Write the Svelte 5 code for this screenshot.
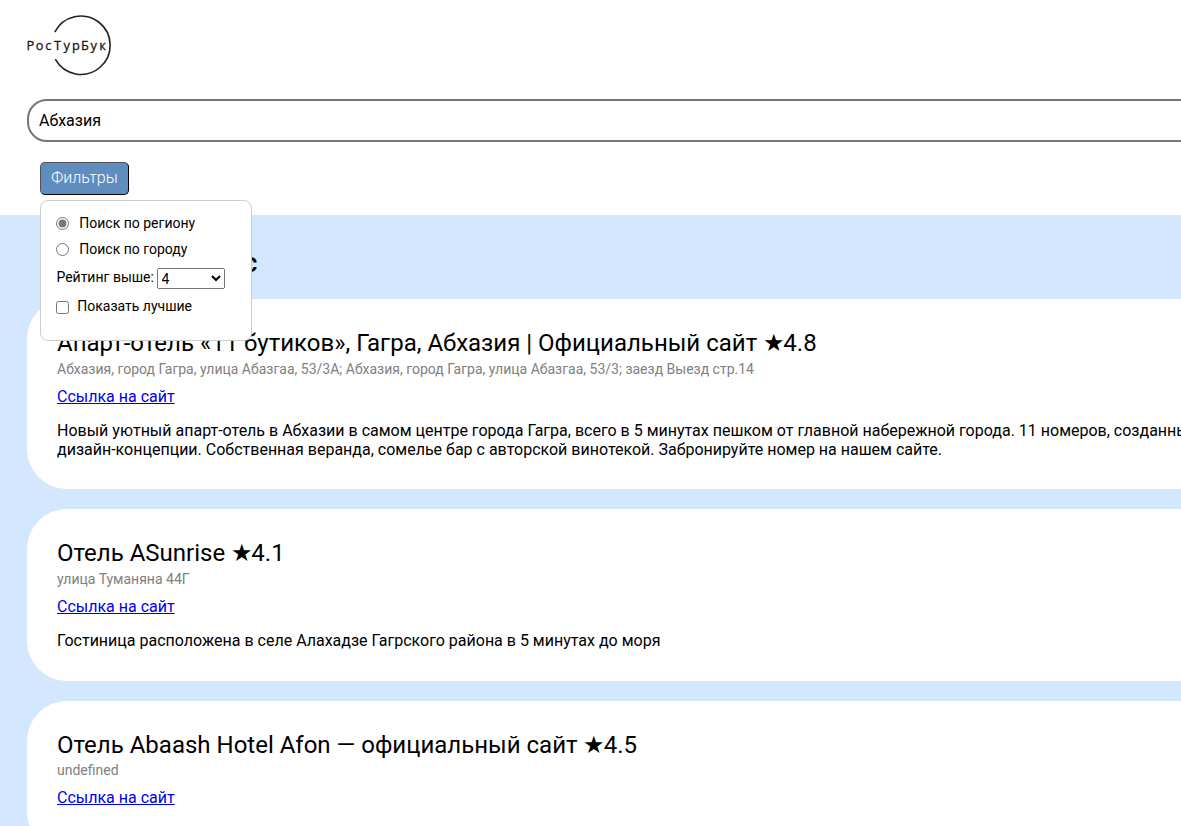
<script>
  let query = $state('Абхазия');
  let mode = $state('region');
  let rating = $state('4');
  let best = $state(false);

  const hotels = [
    {
      title: 'Апарт-отель «11 бутиков», Гагра, Абхазия | Официальный сайт',
      rating: '4.8',
      address: 'Абхазия, город Гагра, улица Абазгаа, 53/3А; Абхазия, город Гагра, улица Абазгаа, 53/3; заезд Выезд стр.14',
      text: [
        'Новый уютный апарт-отель в Абхазии в самом центре города Гагра, всего в 5 минутах пешком от главной набережной города. 11 номеров, созданных по',
        'дизайн-концепции. Собственная веранда, сомелье бар с авторской винотекой. Забронируйте номер на нашем сайте.'
      ]
    },
    {
      title: 'Отель ASunrise',
      rating: '4.1',
      address: 'улица Туманяна 44Г',
      text: ['Гостиница расположена в селе Алахадзе Гагрского района в 5 минутах до моря']
    },
    {
      title: 'Отель Abaash Hotel Afon — официальный сайт',
      rating: '4.5',
      address: 'undefined',
      text: ['']
    }
  ];
</script>

<div class="page">
  <header>
    <svg class="logo" width="86" height="62" viewBox="0 0 86 62" role="img" aria-label="РосТурБук">
      <path d="M27.8 18.2A29.2 29.2 0 1 1 28.3 45.2" fill="none" stroke="#222" stroke-width="1.6" />
      <text x="-0.6 8.8 18.2 27 36.6 45 54 63.6 72.2" y="36.4">РосТурБук</text>
    </svg>
    <input class="search" type="text" bind:value={query} />
    <div class="filters">
      <button type="button">Фильтры</button>
      <div class="menu">
        <label class="row"><input type="radio" value="region" bind:group={mode} /><span>Поиск по региону</span></label>
        <label class="row second"><input type="radio" value="city" bind:group={mode} /><span>Поиск по городу</span></label>
        <label class="row rate">
          <span>Рейтинг выше:</span>
          <select bind:value={rating}>
            <option>1</option><option>2</option><option>3</option><option>4</option>
          </select>
        </label>
        <label class="row best"><input type="checkbox" bind:checked={best} /><span>Показать лучшие</span></label>
      </div>
    </div>
  </header>

  <main>
    <h1>Ваш запрос</h1>
    {#each hotels as hotel}
      <article>
        <h2>{hotel.title} <span class="star">★</span>{hotel.rating}</h2>
        <p class="address">{hotel.address}</p>
        <a href="#site">Ссылка на сайт</a>
        <div class="text">
          {#each hotel.text as line}<p>{line}</p>{/each}
        </div>
      </article>
    {/each}
  </main>
</div>

<style>
  :global(body) { margin: 0; overflow: hidden; }
  .page {
    height: 826px;
    overflow: hidden;
    font-family: Roboto, sans-serif;
    font-size: 16px;
    color: #000;
    background: #fff;
  }
  header {
    box-sizing: border-box;
    height: 215px;
    padding: 14px 0 0 27px;
    display: flex;
    flex-direction: column;
    align-items: flex-start;
  }
  .logo { display: block; flex: none; margin-bottom: 23px; overflow: visible; }
  .logo text {
    font-family: 'Open Sans', sans-serif;
    font-size: 12.8px;
    font-weight: 500;
    fill: #111;
    stroke: #222;
    stroke-width: 0.3px;
  }
  .search {
    box-sizing: border-box;
    flex: none;
    width: 1300px;
    height: 43px;
    padding: 0 10px;
    border: 2px solid #767676;
    border-radius: 20px;
    font: 16px Roboto, sans-serif;
    color: #000;
    background: #fff;
  }
  .filters { position: relative; margin: 20px 0 0 13px; }
  button {
    display: block;
    box-sizing: border-box;
    width: 89px;
    height: 33px;
    padding: 0 0 2px;
    border: 1px outset #000;
    border-radius: 5px;
    background: #5f8dbf;
    color: #fff;
    font: 300 16px Roboto, sans-serif;
  }
  .menu {
    position: absolute;
    z-index: 1;
    top: 38px;
    left: 0;
    box-sizing: border-box;
    width: 212px;
    height: 141px;
    padding: 14px 15px;
    border: 1px solid #ccc;
    border-radius: 8px;
    background: #fff;
    font-size: 14px;
    line-height: 16px;
  }
  .row { display: flex; align-items: center; height: 16px; white-space: nowrap; }
  .row input { flex: none; width: 13px; height: 13px; margin: 1px 10px 0 0; }
  .row input[type='radio'] { accent-color: #767676; }
  .row input + span { padding-left: 0.3px; }
  .second { margin-top: 10px; }
  .rate { height: 21px; margin-top: 11px; }
  .rate span { margin: -3px 2.6px 0 0; padding-left: 0.4px; }
  select {
    box-sizing: border-box;
    width: 68px;
    height: 21px;
    font: 14px Roboto, sans-serif;
    color: #000;
  }
  .best { margin-top: 9px; }
  .row.best input { margin: 2px 8px 0 0; }
  .best span { margin-top: -1px; }
  main { min-height: 611px; padding-left: 27px; background: #d3e8ff; }
  h1 {
    width: 230.5px;
    height: 84px;
    margin: 0;
    font-size: 28px;
    font-weight: 500;
    line-height: 95px;
    text-align: right;
  }
  article {
    width: 1300px;
    box-sizing: border-box;
    padding: 30px;
    margin-bottom: 20px;
    border-radius: 40px;
    background: #fff;
    white-space: nowrap;
  }
  h2 { margin: 0; font-size: 24px; font-weight: 400; line-height: 28px; }
  .star { margin-left: -0.4px; letter-spacing: -1.4px; }
  p { margin: 0; line-height: 19px; }
  .address { margin-top: 3.6px; font-size: 14px; line-height: 16px; color: gray; }
  a { display: block; width: max-content; margin-top: 10px; line-height: 19px; color: #00e; text-decoration: underline; }
  .text { margin: 15.15px 0 0.6px; }
</style>
